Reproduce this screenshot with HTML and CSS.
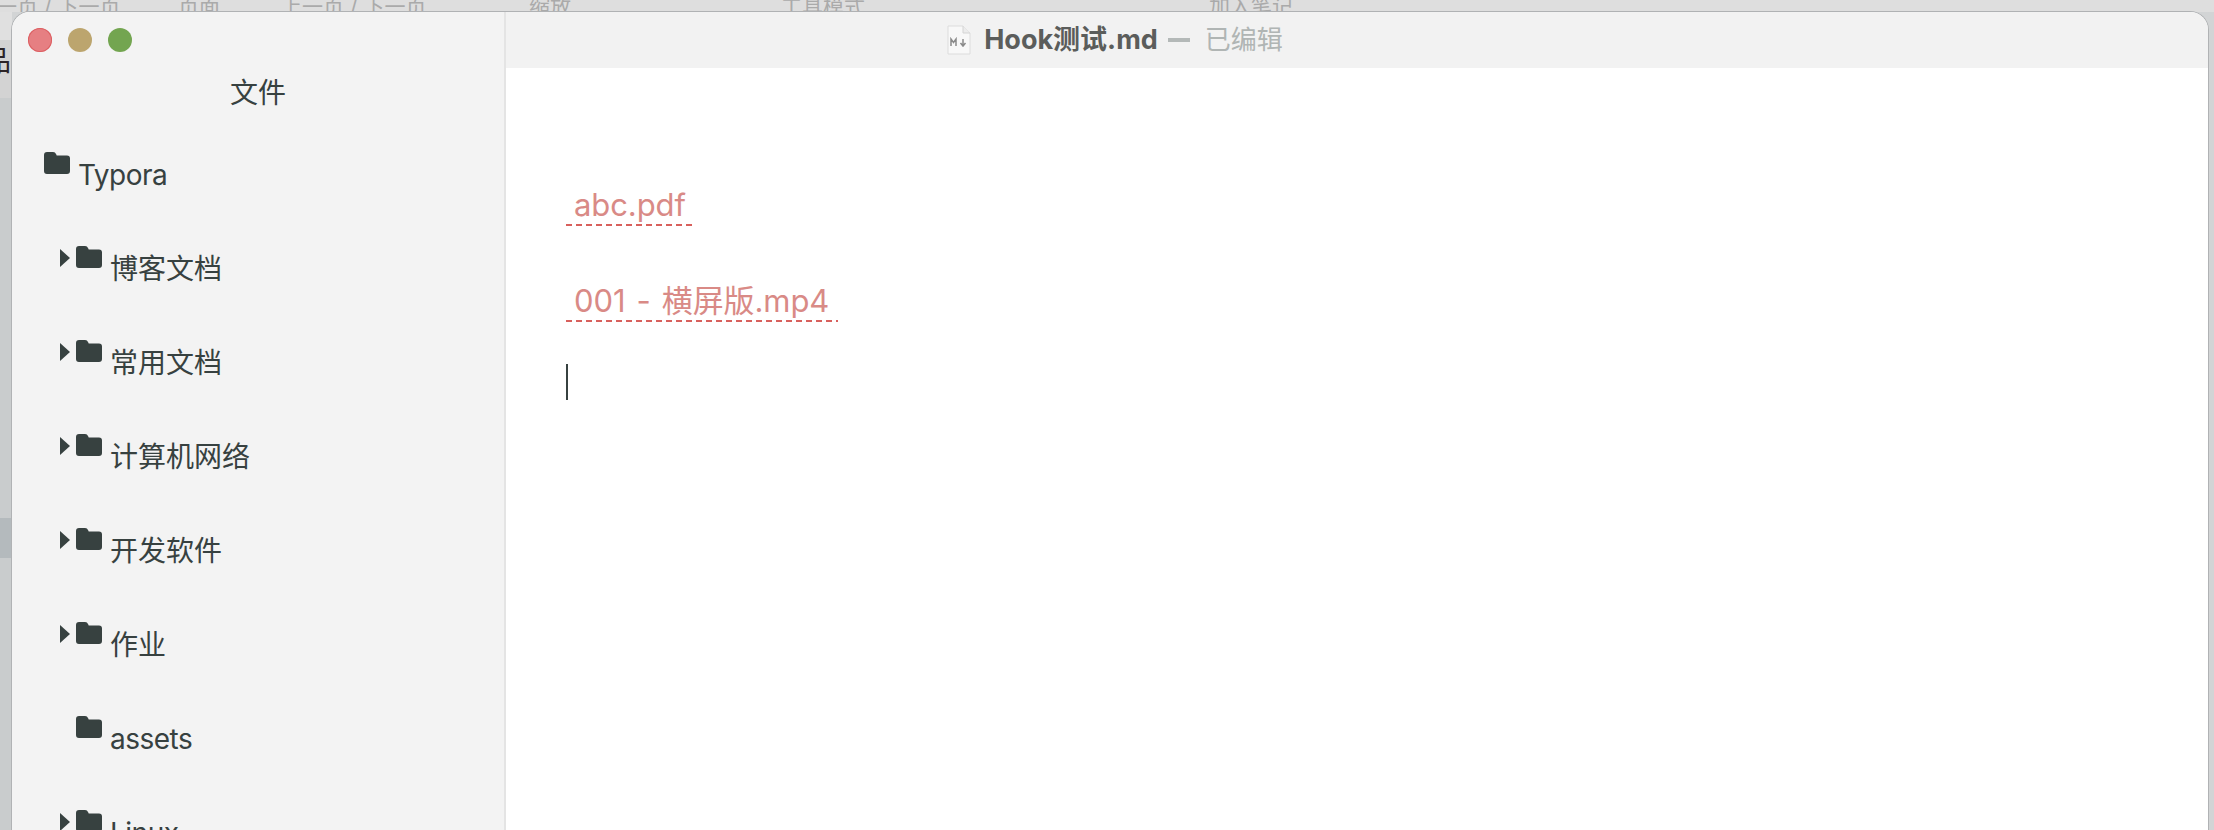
FILE: index.html
```html
<!DOCTYPE html>
<html lang="zh-CN">
<head>
    <meta charset="UTF-8">
    <title>Hook测试.md</title>
    <link rel="stylesheet" href="styles.css">
</head>
<body>

<div class="toolbar-behind">
    <span class="tb-prev">一页 / 下一页</span>
    <span class="tb-page">页面</span>
    <span class="tb-next">上一页 / 下一页</span>
    <span class="tb-zoom">缩放</span>
    <span class="tb-mode">工具模式</span>
    <span class="tb-note">加入笔记</span>
</div>
<div class="side-behind">
    <span class="side-char">品</span>
    <div class="side-selected"></div>
</div>

<div class="window">
    <aside class="sidebar">
        <div class="traffic">
            <span class="light red"></span>
            <span class="light yellow"></span>
            <span class="light green"></span>
        </div>
        <h1 class="side-title">文件</h1>
        <ul class="tree">
            <li class="row root">
                <svg class="folder" viewBox="0 0 26 22"><path d="M3 0h6c1.500 0 2.500.8 3.300 2.500l.4 1H23a3 3 0 0 1 3 3V19a3 3 0 0 1-3 3H3a3 3 0 0 1-3-3V3a3 3 0 0 1 3-3z"/></svg>
                <span class="name latin">Typora</span>
            </li>
            <li class="row">
                <span class="arrow"></span>
                <svg class="folder" viewBox="0 0 26 22"><path d="M3 0h6c1.500 0 2.500.8 3.300 2.500l.4 1H23a3 3 0 0 1 3 3V19a3 3 0 0 1-3 3H3a3 3 0 0 1-3-3V3a3 3 0 0 1 3-3z"/></svg>
                <span class="name">博客文档</span>
            </li>
            <li class="row">
                <span class="arrow"></span>
                <svg class="folder" viewBox="0 0 26 22"><path d="M3 0h6c1.500 0 2.500.8 3.300 2.500l.4 1H23a3 3 0 0 1 3 3V19a3 3 0 0 1-3 3H3a3 3 0 0 1-3-3V3a3 3 0 0 1 3-3z"/></svg>
                <span class="name">常用文档</span>
            </li>
            <li class="row">
                <span class="arrow"></span>
                <svg class="folder" viewBox="0 0 26 22"><path d="M3 0h6c1.500 0 2.500.8 3.300 2.500l.4 1H23a3 3 0 0 1 3 3V19a3 3 0 0 1-3 3H3a3 3 0 0 1-3-3V3a3 3 0 0 1 3-3z"/></svg>
                <span class="name">计算机网络</span>
            </li>
            <li class="row">
                <span class="arrow"></span>
                <svg class="folder" viewBox="0 0 26 22"><path d="M3 0h6c1.500 0 2.500.8 3.300 2.500l.4 1H23a3 3 0 0 1 3 3V19a3 3 0 0 1-3 3H3a3 3 0 0 1-3-3V3a3 3 0 0 1 3-3z"/></svg>
                <span class="name">开发软件</span>
            </li>
            <li class="row">
                <span class="arrow"></span>
                <svg class="folder" viewBox="0 0 26 22"><path d="M3 0h6c1.500 0 2.500.8 3.300 2.500l.4 1H23a3 3 0 0 1 3 3V19a3 3 0 0 1-3 3H3a3 3 0 0 1-3-3V3a3 3 0 0 1 3-3z"/></svg>
                <span class="name">作业</span>
            </li>
            <li class="row">
                <svg class="folder" viewBox="0 0 26 22"><path d="M3 0h6c1.500 0 2.500.8 3.300 2.500l.4 1H23a3 3 0 0 1 3 3V19a3 3 0 0 1-3 3H3a3 3 0 0 1-3-3V3a3 3 0 0 1 3-3z"/></svg>
                <span class="name latin">assets</span>
            </li>
            <li class="row">
                <span class="arrow"></span>
                <svg class="folder" viewBox="0 0 26 22"><path d="M3 0h6c1.500 0 2.500.8 3.300 2.500l.4 1H23a3 3 0 0 1 3 3V19a3 3 0 0 1-3 3H3a3 3 0 0 1-3-3V3a3 3 0 0 1 3-3z"/></svg>
                <span class="name latin">Linux</span>
            </li>
        </ul>
    </aside>

    <main class="main">
        <header class="titlebar">
            <svg class="doc-icon" viewBox="0 0 24 30">
                <path d="M1 1h15l7 7v21H1z" fill="#f8f8f8" stroke="#dcdcdc"/>
                <path d="M16 1v7h7" fill="#ececec" stroke="#d4d4d4"/>
                <path d="M4 21v-7l2.500 3.500L9 14v7M16 14v6M13.500 18l2.500 3 2.500-3" fill="none" stroke="#8a8a8a" stroke-width="1.500"/>
            </svg>
            <span class="doc-name">Hook测试.md</span>
            <span class="doc-dash"></span>
            <span class="doc-state">已编辑</span>
        </header>
        <section class="editor">
            <p class="para"><a class="link">abc.pdf</a></p>
            <p class="para"><a class="link">001 - 横屏版.mp4</a></p>
            <div class="caret"></div>
        </section>
    </main>
</div>

</body>
</html>
```

FILE: styles.css
```css
html, body {
    margin: 0;
    height: 100%;
    overflow: hidden;
}

body {
    font-family: "Inter", "Noto Sans CJK SC", sans-serif;
    background-color: #d2d4d5;
    color: #374140;
}

.toolbar-behind {
    height: 12px;
    background-color: #dedede;
    overflow: hidden;
    display: flex;
    font-size: 21px;
    line-height: 24px;
    color: #aaaaaa;
    white-space: nowrap;
}

.toolbar-behind span {
    margin-top: -5px;
}

.tb-prev { width: 182px; margin-left: -4px; }
.tb-page { width: 103px; }
.tb-next { width: 248px; }
.tb-zoom { width: 252px; }
.tb-mode { width: 428px; }

.side-behind {
    position: absolute;
    left: 0;
    top: 12px;
    width: 12px;
    height: 818px;
    overflow: hidden;
    background: linear-gradient(#e0e0e0 0, #e0e0e0 28px, #d3d3d3 28px, #d3d3d3 86px, #c9cccd 86px);
}

.side-char {
    position: absolute;
    left: -17px;
    top: 33px;
    font-size: 28px;
    line-height: 32px;
    color: #2c2426;
}

.side-selected {
    position: absolute;
    left: 0;
    top: 506px;
    width: 12px;
    height: 40px;
    background-color: #b4babd;
}

.window {
    position: absolute;
    left: 12px;
    top: 12px;
    width: 2196px;
    height: 830px;
    display: flex;
    background-color: #ffffff;
    border-radius: 18px 18px 0 0;
    overflow: hidden;
    box-shadow: 0 0 0 1px #b0b2b4;
}

.sidebar {
    width: 492px;
    flex-shrink: 0;
    background-color: #f3f3f3;
    border-right: 2px solid #e4e4e4;
}

.traffic {
    display: flex;
    gap: 16px;
    padding: 16px 0 0 16px;
}

.light {
    width: 24px;
    height: 24px;
    border-radius: 50%;
}

.red { background-color: #e67f82; box-shadow: inset 0 0 0 1px #dc5f62; }
.yellow { background-color: #bca56e; }
.green { background-color: #73a550; }

.side-title {
    margin: 21px 0 0;
    text-align: center;
    font-size: 28px;
    font-weight: 400;
    line-height: 40px;
}

.tree {
    list-style: none;
    margin: 0;
    padding: 39px 0 0 32px;
}

.row {
    height: 94px;
    display: flex;
    align-items: flex-start;
    padding-left: 32px;
    font-size: 28px;
    line-height: 40px;
}

.row.root {
    padding-left: 0;
}

.folder {
    width: 26px;
    height: 22px;
    fill: #374140;
    flex-shrink: 0;
}

.arrow {
    width: 0;
    height: 0;
    border-left: 10px solid #374140;
    border-top: 9px solid transparent;
    border-bottom: 9px solid transparent;
    margin: 3px 6px 0 -16px;
}

.name {
    margin: 3px 0 0 8px;
}

.latin {
    letter-spacing: -0.5px;
}

.main {
    flex: 1;
    display: flex;
    flex-direction: column;
}

/* title is centred on the whole window, not on this pane */
.titlebar {
    height: 56px;
    background-color: #f2f2f2;
    display: flex;
    align-items: center;
    justify-content: center;
    padding: 0 484px 5px 0;
    font-size: 27px;
    box-sizing: border-box;
    flex-shrink: 0;
}

.doc-icon {
    width: 24px;
    height: 30px;
    margin: 5px 13px 0 0;
}

.doc-name {
    font-weight: 700;
    color: #5b5d5b;
}

.doc-dash {
    width: 22px;
    height: 4px;
    margin: 5px 15px 0 10px;
    background-color: #b4b9b8;
}

.doc-state {
    color: #b0b5b4;
    font-size: 26px;
}

.editor {
    padding: 104px 0 0 60px;
}

.para {
    margin: 0 0 42px;
    padding-top: 13px;
    font-size: 31px;
    line-height: 39px;
}

.link {
    display: inline-block;
    padding: 0 9px 2px 8px;
    color: #d98a86;
    letter-spacing: -0.1px;
    word-spacing: 2.500px;
    background: repeating-linear-gradient(90deg, #d8605c 0, #d8605c 6px, transparent 6px, transparent 10px) left bottom / 100% 2px no-repeat;
}

.caret {
    width: 2px;
    height: 36px;
    background-color: #374140;
}
```
